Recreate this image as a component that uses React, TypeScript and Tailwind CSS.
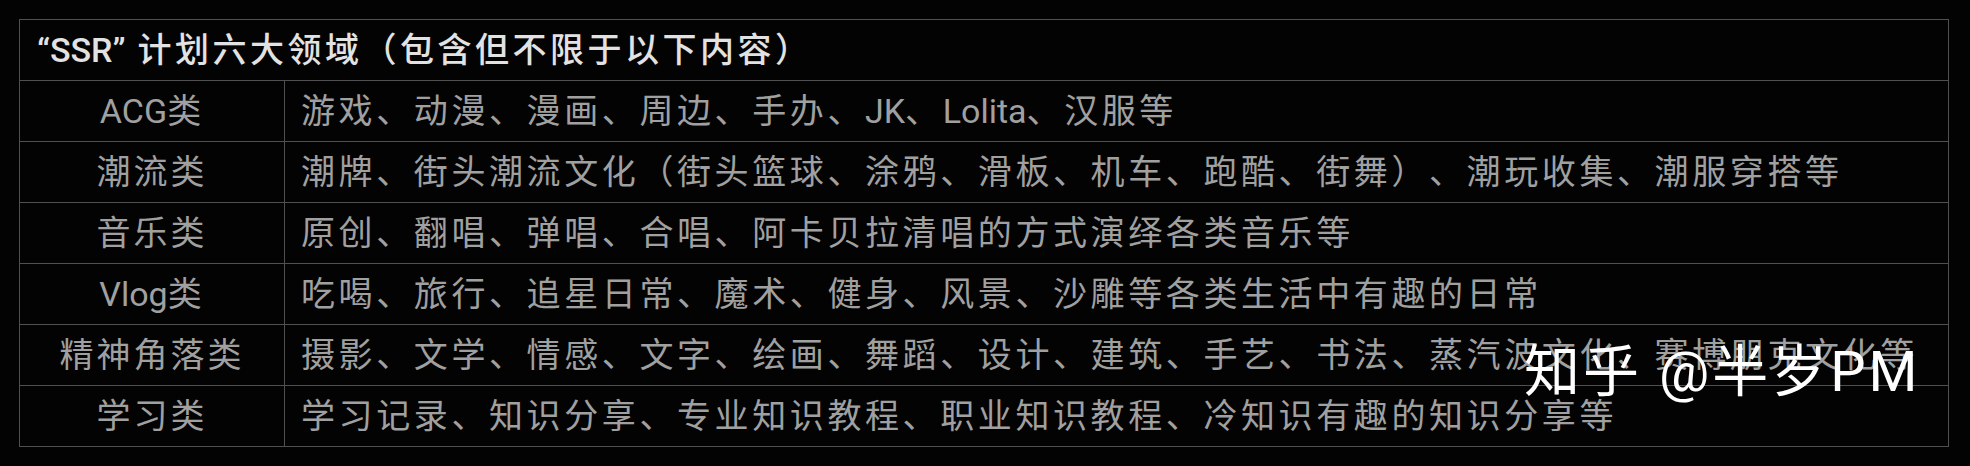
const rows = [
  { name: 'ACG类', items: '游戏、动漫、漫画、周边、手办、JK、Lolita、汉服等' },
  { name: '潮流类', items: '潮牌、街头潮流文化（街头篮球、涂鸦、滑板、机车、跑酷、街舞）、潮玩收集、潮服穿搭等' },
  { name: '音乐类', items: '原创、翻唱、弹唱、合唱、阿卡贝拉清唱的方式演绎各类音乐等' },
  { name: 'Vlog类', items: '吃喝、旅行、追星日常、魔术、健身、风景、沙雕等各类生活中有趣的日常' },
  { name: '精神角落类', items: '摄影、文学、情感、文字、绘画、舞蹈、设计、建筑、手艺、书法、蒸汽波文化、赛博朋克文化等' },
  { name: '学习类', items: '学习记录、知识分享、专业知识教程、职业知识教程、冷知识有趣的知识分享等' },
];

// latin runs get no extra tracking, CJK keeps the wide spacing
function Mixed({ text }: { text: string }) {
  return (
    <>
      {text.split(/([A-Za-z“”"]+)/).map((part, i) =>
        /^[A-Za-z“”"]+$/.test(part) ? (
          <span key={i} className="tracking-normal">
            {part}
          </span>
        ) : (
          <span key={i}>{part}</span>
        )
      )}
    </>
  );
}

export default function App() {
  return (
    <div
      className="relative h-[466px] w-[1970px] overflow-hidden bg-[#030303] px-[19px] pt-[19px] [text-spacing-trim:space-all]"
      style={{ fontFamily: 'Roboto, "Noto Sans CJK SC", "Noto Sans", sans-serif' }}
    >
      <table className="w-[1930px] border-collapse">
        <tbody>
          <tr className="h-[61px]">
            <td
              colSpan={2}
              className="border border-[#505050] pl-[17px] text-[34px] font-medium leading-none tracking-[3.5px] text-[#e2e2e2] whitespace-nowrap"
            >
              <Mixed text="“SSR” 计划六大领域（包含但不限于以下内容）" />
            </td>
          </tr>
          {rows.map((row) => (
            <tr key={row.name} className="h-[61px]">
              <td className="w-[265px] border border-[#505050] text-center text-[34px] leading-none tracking-[3px] text-[#a0a0a0]">
                <Mixed text={row.name} />
              </td>
              <td className="border border-[#505050] pl-[16px] text-[34px] leading-none tracking-[3.6px] text-[#a0a0a0] whitespace-nowrap">
                <Mixed text={row.items} />
              </td>
            </tr>
          ))}
        </tbody>
      </table>
      <div className="absolute left-[1524px] top-[344px] text-[56px] leading-none tracking-[3px] text-white whitespace-nowrap">
        知乎 @半岁PM
      </div>
    </div>
  );
}
